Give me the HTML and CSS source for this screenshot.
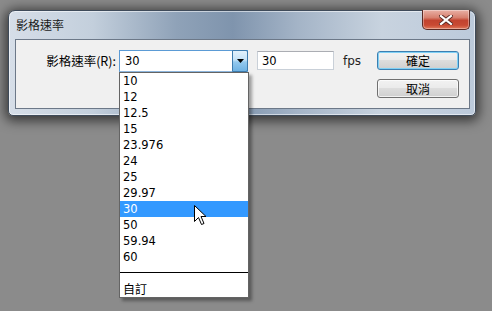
FILE: index.html
```html
<!DOCTYPE html>
<html lang="zh-Hant">
<head>
  <meta charset="UTF-8" />
  <title>影格速率</title>
  <link rel="stylesheet" href="styles.css">
</head>
<body>
  <div class="window">
    <div class="titlebar">
      <span class="title">影格速率</span>
      <button class="close-btn">
        <svg width="14" height="10" viewBox="0 0 14 10">
          <path d="M2 1 L12 9 M12 1 L2 9" stroke="#5a2a24" stroke-width="4" stroke-linecap="square"/>
          <path d="M2 1 L12 9 M12 1 L2 9" stroke="#ffffff" stroke-width="2.2" stroke-linecap="square"/>
        </svg>
      </button>
    </div>

    <div class="client">
      <div class="row">
        <label class="label">影格速率(R):</label>
        <div class="combo">
          <span class="combo-value">30</span>
          <span class="combo-arrow">
            <svg width="7" height="4" viewBox="0 0 7 4"><path d="M0 0 L7 0 L3.5 4 Z" fill="#000"/></svg>
          </span>

          <ul class="combo-list">
            <li>10</li>
            <li>12</li>
            <li>12.5</li>
            <li>15</li>
            <li>23.976</li>
            <li>24</li>
            <li>25</li>
            <li>29.97</li>
            <li class="selected">30</li>
            <li>50</li>
            <li>59.94</li>
            <li>60</li>
            <li class="separator"></li>
            <li>自訂</li>
          </ul>

          <svg class="cursor" width="13" height="21" viewBox="0 0 13 21">
            <path d="M0.5 0.5 L0.5 16.5 L4.5 12.5 L7.5 19.5 L10 18.5 L7 11.5 L12 11.5 Z" fill="#fff" stroke="#000" stroke-width="1" stroke-linejoin="miter"/>
          </svg>
        </div>
        <input class="fps-input" type="text" value="30">
        <span class="unit">fps</span>

        <div class="buttons">
          <button class="btn default">確定</button>
          <button class="btn">取消</button>
        </div>
      </div>
    </div>
  </div>
</body>
</html>
```

FILE: styles.css
```css
html, body {
  margin: 0;
  padding: 0;
}

body {
  width: 492px;
  height: 311px;
  overflow: hidden;
  background: #8b8b8b;
  font-family: "Noto Sans CJK TC", "DejaVu Sans", sans-serif;
  font-size: 12px;
  padding: 10px 0 0 8px;
  box-sizing: border-box;
}

.window {
  position: relative;
  width: 468px;
  height: 106px;
  box-sizing: border-box;
  border: 1px solid #3f4b5a;
  border-radius: 7px 7px 5px 5px;
  background: linear-gradient(90deg, #d6dee8 0%, #c3cfdc 18%, #8fa2b8 36%, #7f94ad 48%, #a4b4c7 62%, #c8d3df 80%, #bccadb 100%);
  box-shadow: 0 2px 12px 3px rgba(0, 0, 0, 0.6), inset 0 0 0 1px rgba(255, 255, 255, 0.55);
}

.titlebar {
  height: 28px;
  display: flex;
  align-items: flex-start;
}

.title {
  margin: 7px 0 0 7px;
  color: #1a1a1a;
  font-size: 12px;
  line-height: 14px;
}

.close-btn {
  margin: -1px 5px 0 auto;
  width: 48px;
  height: 20px;
  border: 1px solid #5b2b25;
  border-top: none;
  border-radius: 0 0 5px 5px;
  background: linear-gradient(180deg, #e9b1a6 0%, #d7806f 40%, #c2432f 55%, #c94a33 80%, #e07a5c 100%);
  display: flex;
  align-items: center;
  justify-content: center;
  padding: 0;
  box-shadow: inset 0 0 0 1px rgba(255, 255, 255, 0.35);
}

.client {
  margin: 0 5px 0 6px;
  height: 70px;
  box-sizing: border-box;
  border: 1px solid #6c7888;
  background: #f0f0f0;
  padding: 10px 10px 0 0;
}

.row {
  display: flex;
  align-items: flex-start;
}

.label {
  width: 100px;
  text-align: right;
  line-height: 22px;
  font-size: 12.5px;
  color: #000;
}

.combo {
  position: relative;
  margin-left: 3px;
  width: 129px;
  height: 22px;
  box-sizing: border-box;
  border: 1px solid #5b9bd5;
  border-bottom-color: #8fb7de;
  background: #fff;
  display: flex;
}

.combo-value {
  flex: 1;
  padding-left: 5px;
  line-height: 20px;
  font-family: "DejaVu Sans", sans-serif;
  font-size: 11.5px;
}

.combo-arrow {
  width: 14px;
  margin: -1px -1px -1px 0;
  border: 1px solid #3d7bad;
  border-radius: 0 2px 2px 0;
  background: linear-gradient(180deg, #e3f1fb 0%, #c4e2f7 45%, #93c9ee 55%, #6fb2e3 100%);
  display: flex;
  align-items: center;
  justify-content: center;
}

.combo-list {
  position: absolute;
  top: 21px;
  left: -1px;
  width: 130px;
  margin: 0;
  padding: 0;
  list-style: none;
  box-sizing: border-box;
  border: 1px solid #646464;
  background: #fff;
  box-shadow: 3px 3px 3px rgba(0, 0, 0, 0.35);
  font-family: "DejaVu Sans", sans-serif;
  font-size: 11.5px;
  z-index: 5;
}

.combo-list li {
  height: 16px;
  line-height: 16px;
  padding-left: 3px;
  color: #000;
}

.combo-list li.selected {
  background: #3399ff;
  color: #fff;
}

.combo-list li.separator {
  position: relative;
}

.combo-list li.separator::after {
  content: "";
  position: absolute;
  left: 0;
  right: 0;
  top: 7px;
  border-top: 1px solid #000;
}

.combo-list li:last-child {
  font-family: "Noto Sans CJK TC", sans-serif;
  font-size: 12px;
}

.cursor {
  position: absolute;
  left: 74px;
  top: 154px;
  z-index: 6;
}

.fps-input {
  margin: 1px 0 0 9px;
  width: 77px;
  height: 19px;
  box-sizing: border-box;
  border: 1px solid #c9d0d8;
  border-top-color: #abadb3;
  padding: 0 0 0 4px;
  font-family: "DejaVu Sans", sans-serif;
  font-size: 11.5px;
  color: #000;
  background: #fff;
  outline: none;
}

.unit {
  margin-left: 9px;
  line-height: 22px;
  font-family: "DejaVu Sans", sans-serif;
  font-size: 12px;
  color: #222;
}

.buttons {
  margin: 1px 0 0 auto;
  display: flex;
  flex-direction: column;
  gap: 9px;
}

.btn {
  width: 82px;
  height: 19px;
  padding: 0;
  border: 1px solid #707070;
  border-radius: 3px;
  background: linear-gradient(180deg, #f2f2f2 0%, #ebebeb 45%, #dddddd 50%, #cfcfcf 100%);
  font-family: "Noto Sans CJK TC", sans-serif;
  font-size: 12px;
  line-height: 16px;
  color: #000;
  box-shadow: inset 0 0 0 1px rgba(255, 255, 255, 0.7);
}

.btn.default {
  border-color: #3c7fb1;
  box-shadow: inset 0 0 0 1px #7fd0f5;
}
```
